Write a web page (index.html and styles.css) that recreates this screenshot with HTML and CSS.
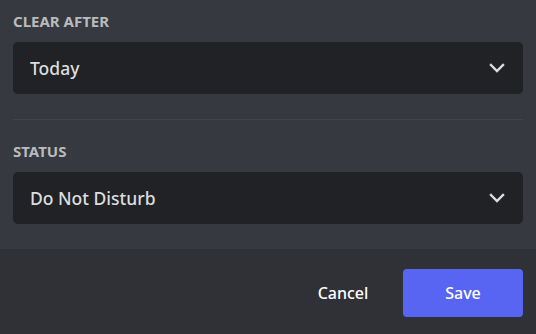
FILE: index.html
```html
<!DOCTYPE html>
<html>
<head>
<meta charset="utf-8">
<link rel="stylesheet" href="styles.css">
</head>
<body>
<div class="modal">
  <div class="content">
    <div class="field">
      <div class="label">Clear After</div>
      <div class="select">
        <span class="value">Today</span>
        <svg class="chev" width="16" height="10" viewBox="0 0 16 10"><path d="M2 2 L8 8 L14 2" fill="none" stroke="#dcddde" stroke-width="2.4" stroke-linecap="square"/></svg>
      </div>
    </div>
    <div class="divider"></div>
    <div class="field">
      <div class="label">Status</div>
      <div class="select">
        <span class="value">Do Not Disturb</span>
        <svg class="chev" width="16" height="10" viewBox="0 0 16 10"><path d="M2 2 L8 8 L14 2" fill="none" stroke="#dcddde" stroke-width="2.4" stroke-linecap="square"/></svg>
      </div>
    </div>
  </div>
  <div class="footer">
    <button class="btn cancel">Cancel</button>
    <button class="btn save">Save</button>
  </div>
</div>
</body>
</html>
```
FILE: styles.css
```css
html, body {
  margin: 0;
  padding: 0;
  background: #36393f;
}
.modal {
  width: 536px;
  height: 334px;
  display: flex;
  flex-direction: column;
  font-family: "Noto Sans", "Open Sans", sans-serif;
}
.content {
  height: 249px;
  box-sizing: border-box;
  padding: 12px 13px 0 13px;
  background: #36393f;
}
.label {
  font-size: 15px;
  line-height: 18px;
  font-weight: 700;
  text-transform: uppercase;
  color: #b9bbbe;
}
.select {
  margin-top: 12px;
  height: 52px;
  border-radius: 5px;
  background: #202225;
  display: flex;
  align-items: center;
  justify-content: space-between;
  padding: 0 18px 0 17px;
  box-sizing: border-box;
}
.value {
  font-size: 17.5px;
  color: #dcddde;
  font-weight: 500;
}
.chev {
  display: block;
}
.divider {
  height: 1px;
  background: #42454c;
  margin: 25px 0 22px;
}
.footer {
  flex: 1;
  background: #2f3136;
  display: flex;
  justify-content: flex-end;
  align-items: flex-start;
  padding: 20px 13px 0 0;
  gap: 20px;
}
.btn {
  border: none;
  font-family: inherit;
  font-size: 16px;
  font-weight: 500;
  height: 48px;
  border-radius: 4px;
  cursor: pointer;
}
.cancel {
  background: transparent;
  color: #ffffff;
  width: 80px;
}
.save {
  background: #5865f2;
  color: #ffffff;
  width: 120px;
}
```
